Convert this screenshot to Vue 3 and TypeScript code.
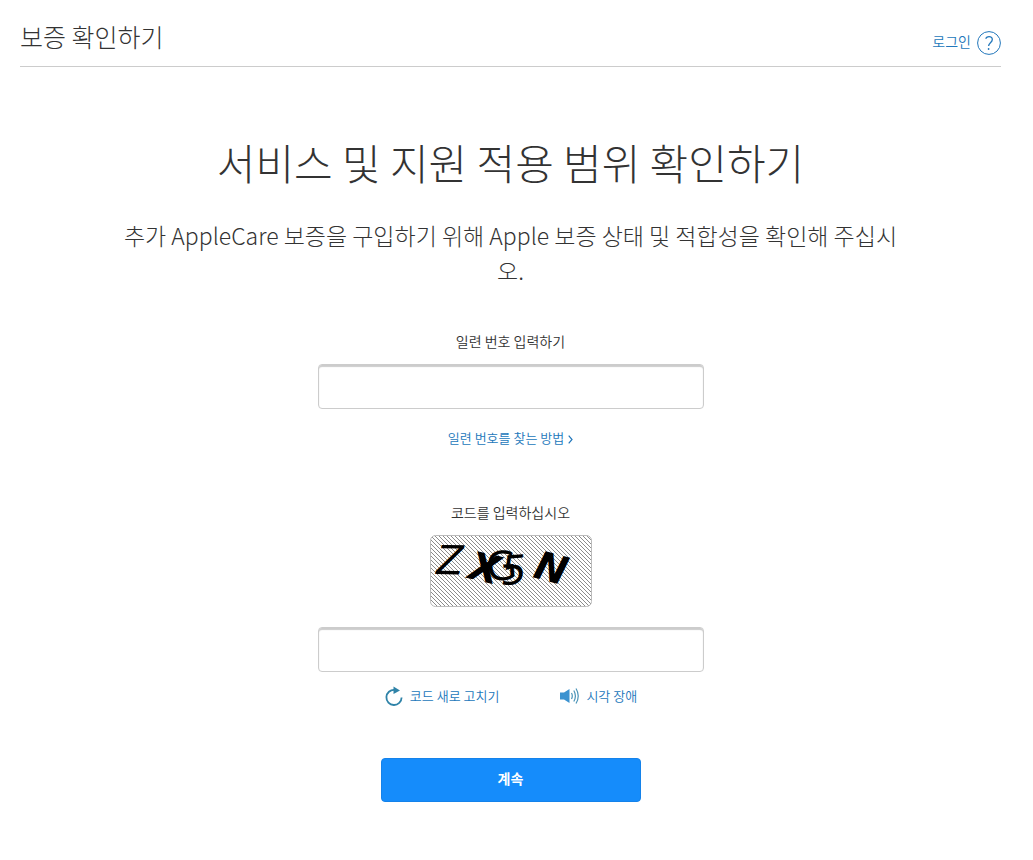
<script setup lang="ts">
import { ref } from 'vue'

interface CaptchaLetter {
  glyph: string
  x: number
  y: number
  size: number
  angle: number
  weight: number
  italic: boolean
}

const serial = ref('')
const code = ref('')

const letters: CaptchaLetter[] = [
  { glyph: 'Z', x: 6, y: 39, size: 40, angle: 1, weight: 400, italic: true },
  { glyph: 'X', x: 37, y: 43, size: 39, angle: 13, weight: 700, italic: true },
  { glyph: 'G', x: 57, y: 46, size: 40, angle: -4, weight: 400, italic: false },
  { glyph: '5', x: 72, y: 50, size: 40, angle: -4, weight: 400, italic: true },
  { glyph: 'N', x: 102, y: 42, size: 39, angle: 15, weight: 700, italic: true },
]
</script>

<template>
  <div class="page">
    <header class="topbar">
      <h2 class="topbar-title">보증 확인하기</h2>
      <nav class="topbar-nav">
        <a href="#login">로그인</a>
        <a href="#help" class="help" aria-label="도움말">
          <svg width="24" height="24" viewBox="0 0 24 24" fill="none" stroke="currentColor">
            <circle cx="12" cy="12" r="11.4" />
            <path d="M8.6 7.6C9.4 6.2 10.6 5.6 12 5.6c2 0 3.3 1.2 3.3 2.9 0 3.2-3.7 3.4-3.7 6.6" stroke-width="1.3" />
            <circle cx="11.6" cy="18" r="0.9" fill="currentColor" stroke="none" />
          </svg>
        </a>
      </nav>
    </header>

    <main class="content">
      <h1 class="headline">서비스 및 지원 적용 범위 확인하기</h1>
      <p class="intro">추가 AppleCare 보증을 구입하기 위해 Apple 보증 상태 및 적합성을 확인해 주십시오.</p>

      <form class="form" @submit.prevent>
        <label for="serial" class="label">일련 번호 입력하기</label>
        <input id="serial" v-model="serial" class="field" type="text" autocomplete="off" />
        <a href="#find-serial" class="find-link">
          일련 번호를 찾는 방법
          <svg width="5" height="9" viewBox="0 0 5 9" fill="none" stroke="currentColor" stroke-width="1.2">
            <path d="M0.7 0.7L4 4.5 0.7 8.3" />
          </svg>
        </a>

        <label for="code" class="label">코드를 입력하십시오</label>
        <svg class="captcha" width="162" height="72" viewBox="0 0 162 72" role="img">
          <defs>
            <pattern id="hatch" width="4" height="4" patternUnits="userSpaceOnUse">
              <path d="M-1 -1L5 5M-1 3L1 5M3 -1L5 1" stroke="#8c8c8c" stroke-width="1" />
            </pattern>
          </defs>
          <rect x="0.5" y="0.5" width="161" height="71" rx="5" fill="#fff" />
          <rect x="0.5" y="0.5" width="161" height="71" rx="5" fill="url(#hatch)" stroke="#bbb" />
          <text
            v-for="l in letters"
            :key="l.glyph"
            :x="l.x"
            :y="l.y"
            :font-size="l.size"
            :font-weight="l.weight"
            :font-style="l.italic ? 'italic' : 'normal'"
            :transform="`rotate(${l.angle} ${l.x} ${l.y})`"
          >{{ l.glyph }}</text>
        </svg>
        <input id="code" v-model="code" class="field" type="text" autocomplete="off" aria-label="코드를 입력하십시오" />

        <div class="tools">
          <a href="#refresh" class="tool">
            <svg width="20" height="20" viewBox="0 0 20 20" fill="none">
              <path d="M10.5 3.8A7.6 7.6 0 1 0 17.6 11.5" stroke="#2f83a8" stroke-width="1.8" />
              <path d="M9.5 0.5L16 4.5 9.5 8z" fill="#2f83a8" />
            </svg>
            코드 새로 고치기
          </a>
          <a href="#audio" class="tool">
            <svg width="21" height="18" viewBox="0 0 21 18" fill="none">
              <path d="M1 5.5h4L10.5 2v14L5 12.500H1z" fill="#3b92d0" />
              <path d="M12.5 6q1.6 3 0 6M14.8 3.5q3.2 5.500 0 11M17 1.5q4.5 7.500 0 15" stroke="#4a94b8" stroke-width="1.2" />
            </svg>
            시각 장애
          </a>
        </div>

        <button type="submit" class="submit">계속</button>
      </form>
    </main>
  </div>
</template>

<style>
body {
  margin: 0;
  background: #fff;
}
</style>

<style scoped>
.page {
  padding: 0 32px 0 20px;
  color: #333;
  font-family: "Noto Sans CJK KR", "Noto Sans", sans-serif;
  font-weight: 350;
}
a {
  color: #2277bb;
  text-decoration: none;
}
.topbar {
  display: flex;
  align-items: center;
  justify-content: space-between;
  height: 66px;
  border-bottom: 1px solid #ccc;
}
.topbar-title {
  margin: 0;
  padding-top: 6px;
  font-size: 25px;
  line-height: 32px;
  font-weight: 200;
}
.topbar-nav {
  display: flex;
  align-items: center;
  gap: 6px;
  padding-top: 20px;
  font-size: 14px;
  line-height: 20px;
}
.topbar-nav a:first-child {
  padding-bottom: 4px;
}
.help {
  display: flex;
}
.content {
  display: flex;
  flex-direction: column;
  align-items: center;
  text-align: center;
}
.headline {
  margin: 63px 0 0;
  font-size: 42px;
  line-height: 64px;
  font-weight: 300;
}
.intro {
  max-width: 784px;
  margin: 24px 0 0;
  font-size: 23px;
  line-height: 35px;
  font-weight: 200;
  word-break: break-all;
}
.form {
  display: flex;
  flex-direction: column;
  align-items: center;
  width: 100%;
  margin-top: 41px;
}
.label {
  font-size: 14px;
  line-height: 24px;
}
.field {
  box-sizing: border-box;
  width: 100%;
  max-width: 386px;
  height: 45px;
  margin-top: 11px;
  padding: 0 12px;
  border: 1px solid #ccc;
  border-radius: 4px;
  box-shadow: inset 0 2px 1px #ccc;
  background: #fff;
  font: inherit;
  outline: none;
}
.find-link {
  display: flex;
  align-items: center;
  gap: 4px;
  margin: 19px 0 52px;
  font-size: 13px;
  line-height: 20px;
}
.find-link svg {
  margin-top: 3px;
}
.captcha {
  margin: 11px 0 9px;
  font-family: "DejaVu Sans", sans-serif;
}
.tools {
  display: flex;
  gap: 60px;
  margin-top: 14px;
}
.tool {
  display: flex;
  align-items: center;
  gap: 6px;
  font-size: 13px;
  line-height: 20px;
}
.submit {
  width: 260px;
  height: 44px;
  margin-top: 52px;
  padding: 0 0 4px;
  border: 1px solid #1482ea;
  border-radius: 4px;
  background: #158cfb;
  color: #fff;
  font-family: inherit;
  font-size: 14px;
  font-weight: 700;
  line-height: 20px;
}
</style>
